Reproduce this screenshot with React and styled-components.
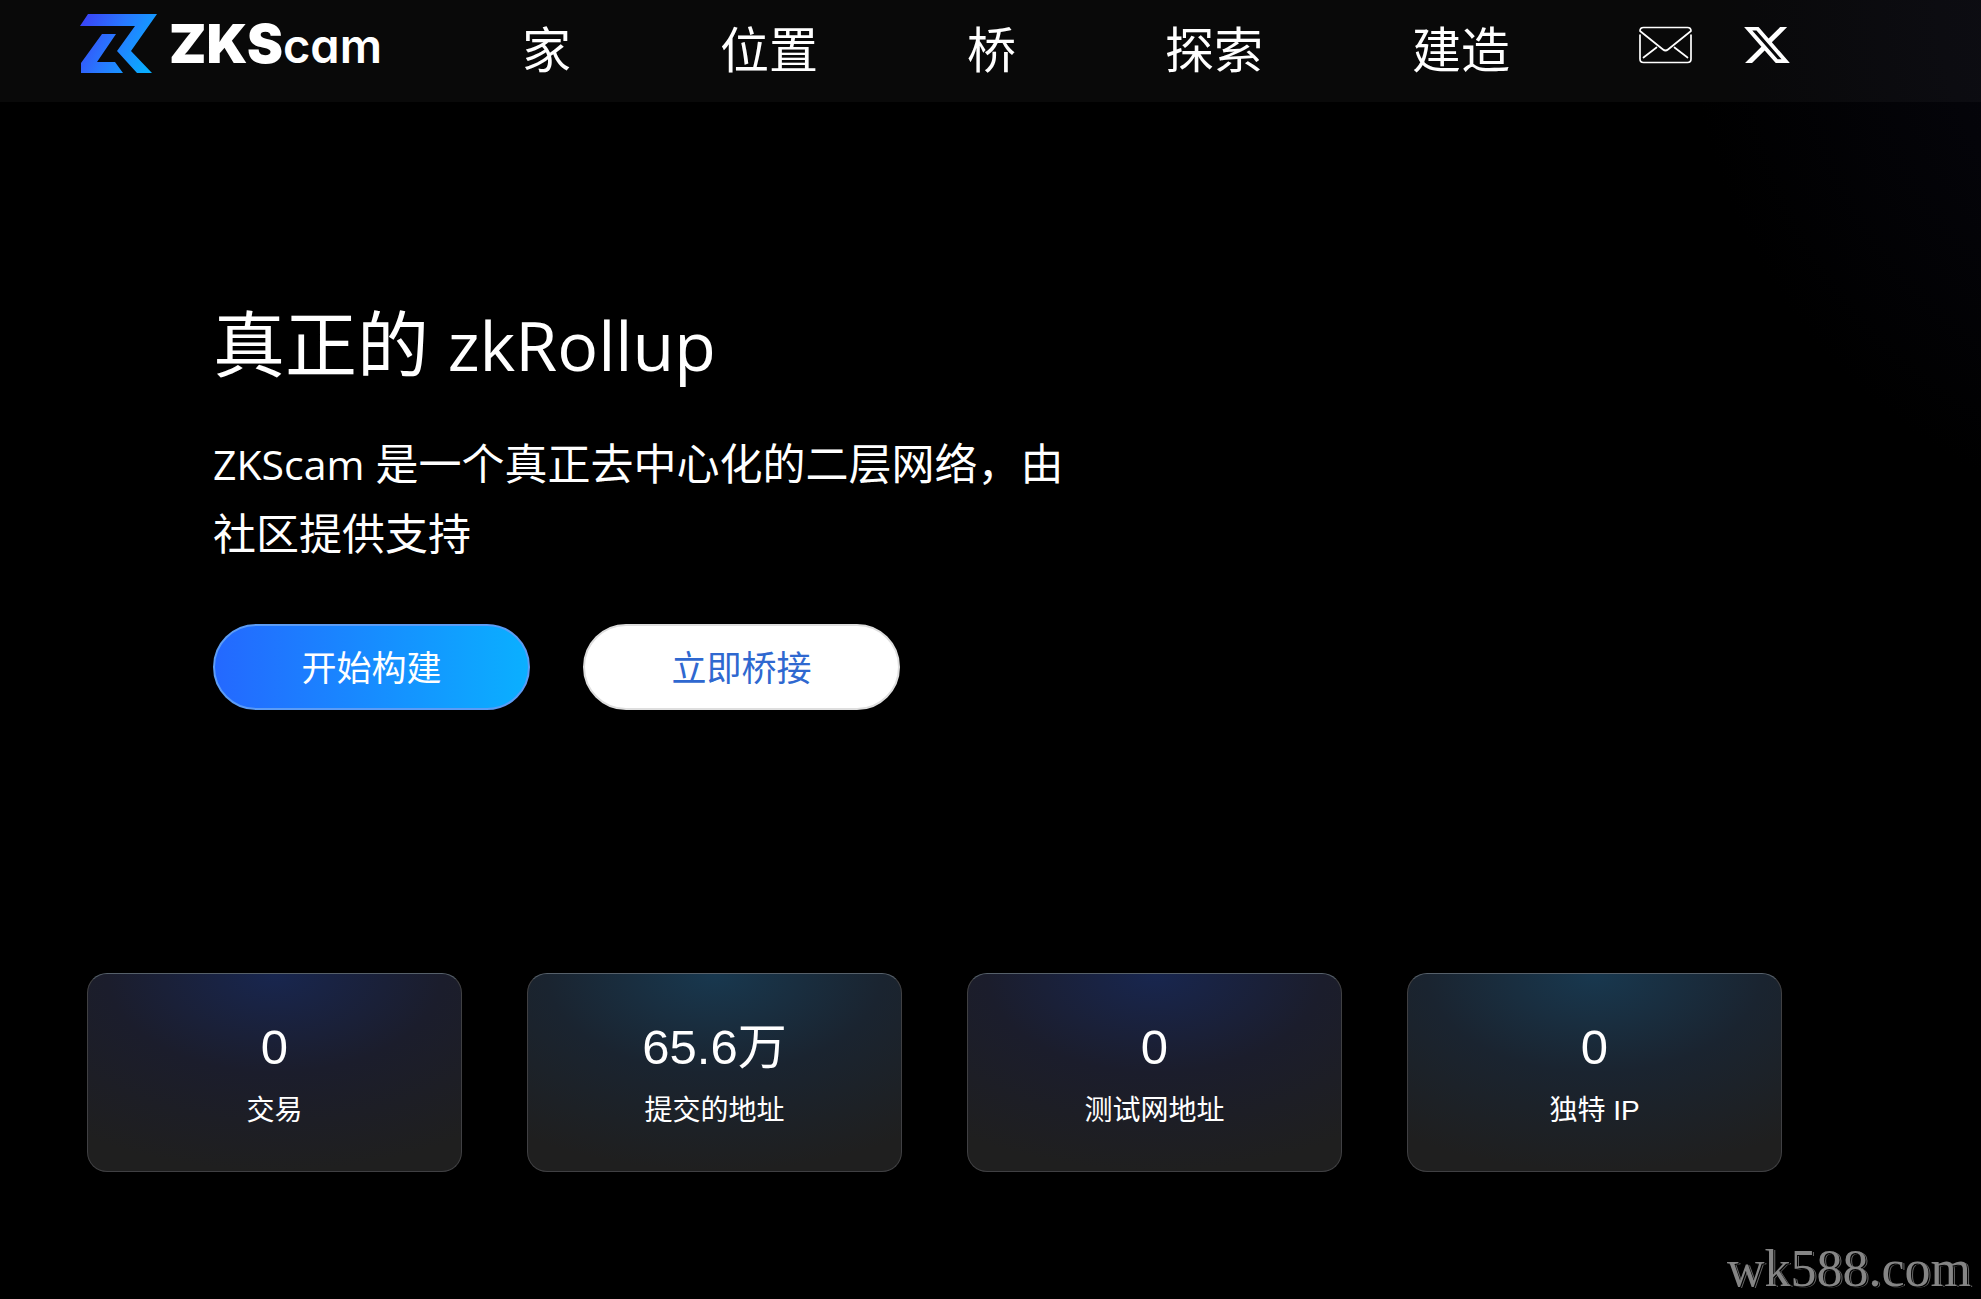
import styled, { createGlobalStyle } from "styled-components";

const GlobalStyle = createGlobalStyle`
    * {
        box-sizing: border-box;
    }

    body {
        margin: 0;
        background: #000;
        color: #fff;
        font-family: "Open Sans", "Noto Sans CJK SC", sans-serif;
    }
`

const Page = styled.div`
    min-height: 100vh;
    display: flex;
    flex-direction: column;
    background: radial-gradient(circle at 112% 0, #07070f 0, #040409 280px, #000 530px);
`

const Header = styled.header`
    display: flex;
    align-items: center;
    height: 102px;
    padding: 0 80px 12px;
    background: rgba(255, 255, 255, 0.035);
`

const Logo = styled.a`
    display: flex;
    flex-shrink: 0;
    gap: 12px;
    width: 306px;
    color: #fff;
    font-family: Inter, sans-serif;
    font-size: 54px;
    font-weight: 900;
    line-height: 60px;
    white-space: nowrap;
    text-decoration: none;
`

const LogoTail = styled.span`
    font-size: 47px;
    font-weight: 600;
    font-feature-settings: "cv11";
`

const Nav = styled.nav`
    display: flex;
    gap: 149px;
    margin-left: 136px;
    padding-top: 8px;
`

const NavLink = styled.a`
    color: #fff;
    font-size: 49px;
    line-height: 60px;
    white-space: nowrap;
    text-decoration: none;
`

const Socials = styled.div`
    display: flex;
    align-items: center;
    gap: 52px;
    margin-left: 129px;
`

const IconLink = styled.a`
    display: flex;
    color: #fff;
`

const Hero = styled.section`
    max-width: 1094px;
    padding: 187px 0 0 213px;
`

const Title = styled.h1`
    margin: 0;
    font-size: 72px;
    font-weight: 400;
    line-height: 108px;
`

const TitleLatin = styled.span`
    font-size: 68px;
`

const Lead = styled.p`
    margin: 30px 0 0;
    font-size: 43px;
    line-height: 69px;
`

const LeadLatin = styled.span`
    font-size: 41px;
`

const Actions = styled.div`
    display: flex;
    gap: 53px;
    margin-top: 56px;
`

const Button = styled.button`
    width: 317px;
    height: 86px;
    padding: 0 0 4px;
    border: 2px solid ${({ $primary }) => ($primary ? "#5c9cf5" : "#dedede")};
    border-radius: 43px;
    background: ${({ $primary }) => ($primary ? "linear-gradient(90deg, #2468ff, #0ab0ff) border-box" : "#fff")};
    color: ${({ $primary }) => ($primary ? "#fff" : "#2f68d0")};
    font-family: inherit;
    font-size: 35px;
    cursor: pointer;
`

const Stats = styled.section`
    display: grid;
    grid-template-columns: repeat(4, 1fr);
    gap: 65px;
    margin-top: 263px;
    padding: 0 199px 0 87px;
`

const Card = styled.div`
    display: flex;
    flex-direction: column;
    align-items: center;
    padding: 41px 0 40px;
    border: 1px solid #404043;
    border-top-color: #56606a;
    border-radius: 20px;
    background: radial-gradient(ellipse 90% 100% at 50% 0, ${({ $glow }) => $glow}, ${({ $edge }) => $edge} 50%, #1f1f1f);
    font-family: "Liberation Sans", "Noto Sans CJK SC", sans-serif;
`

const Value = styled.strong`
    font-size: 49px;
    font-weight: 400;
    line-height: 64px;
`

const Label = styled.span`
    margin-top: 12px;
    font-size: 28px;
    line-height: 40px;
`

const Footer = styled.footer`
    margin-top: auto;
    padding: 0 10px 0 0;
    color: #858585;
    font-family: "Liberation Serif", serif;
    font-size: 52px;
    line-height: 60px;
    text-align: right;
    text-shadow: 1px 1px 0 #000, 2px 1px 0 #666;
`

const links = ["家", "位置", "桥", "探索", "建造"];

const blue = { $glow: "#18264f", $edge: "#1b1d2c" };
const cyan = { $glow: "#18384f", $edge: "#1a2430" };

const stats = [
    { value: "0", label: "交易", tone: blue },
    { value: "65.6万", label: "提交的地址", tone: cyan },
    { value: "0", label: "测试网地址", tone: blue },
    { value: "0", label: "独特 IP", tone: cyan },
];

function LogoMark(){
    return(
        <svg width="77" height="60" viewBox="0 1 77 60" aria-hidden="true">
            <defs>
                <linearGradient id="mark" x1="0" y1="0" x2="76" y2="40" gradientUnits="userSpaceOnUse">
                    <stop offset="0" stopColor="#3c3cf5" />
                    <stop offset="0.5" stopColor="#2878ff" />
                    <stop offset="1" stopColor="#08aeff" />
                </linearGradient>
            </defs>
            <g fill="url(#mark)">
                <path d="M8 1H77L51 38L72 60H57L37 38L55 13H0Z" />
                <path d="M22 21H36L17 49H35L43 60H1V50Z" />
            </g>
        </svg>
    );
}

function MailIcon(){
    return(
        <svg width="53" height="38" viewBox="0 0 53 38" fill="none" stroke="currentColor" strokeWidth="1.7" strokeLinecap="round" strokeLinejoin="round">
            <path d="M1 9V33Q1 36.500 4.500 36.500H48.500Q52 36.500 52 33V9" />
            <path d="M1 5Q1 1.500 4.500 1.500H48.500Q52 1.500 52 5L29 23.500Q26.500 25.500 24 23.500Z" />
            <path d="M4.500 31.500L17.500 21.500M48.500 31.500L35.500 21.500" />
        </svg>
    );
}

function XIcon(){
    return(
        <svg width="46" height="36" viewBox="1.2 2.2 21.700 19.600" preserveAspectRatio="none" fill="currentColor">
            <path d="M18.244 2.250h3.308l-7.227 8.260 8.502 11.240H16.170l-5.214-6.817L4.990 21.750H1.680l7.730-8.835L1.254 2.250H8.080l4.713 6.231zm-1.161 17.520h1.833L7.084 4.126H5.117z" />
        </svg>
    );
}

export default function App(){
    return(
        <>
            <GlobalStyle />
            <Page>
                <Header>
                    <Logo href="#">
                        <LogoMark />
                        <span>ZKS<LogoTail>cam</LogoTail></span>
                    </Logo>
                    <Nav>
                        {links.map((link) => (
                            <NavLink key={link} href="#">{link}</NavLink>
                        ))}
                    </Nav>
                    <Socials>
                        <IconLink href="#" aria-label="Email"><MailIcon /></IconLink>
                        <IconLink href="#" aria-label="X"><XIcon /></IconLink>
                    </Socials>
                </Header>

                <main>
                    <Hero>
                        <Title>真正的 <TitleLatin>zkRollup</TitleLatin></Title>
                        <Lead><LeadLatin>ZKScam</LeadLatin> 是一个真正去中心化的二层网络，由社区提供支持</Lead>
                        <Actions>
                            <Button $primary>开始构建</Button>
                            <Button>立即桥接</Button>
                        </Actions>
                    </Hero>

                    <Stats>
                        {stats.map((stat) => (
                            <Card key={stat.label} {...stat.tone}>
                                <Value>{stat.value}</Value>
                                <Label>{stat.label}</Label>
                            </Card>
                        ))}
                    </Stats>
                </main>

                <Footer>wk588.com</Footer>
            </Page>
        </>
    );
}
